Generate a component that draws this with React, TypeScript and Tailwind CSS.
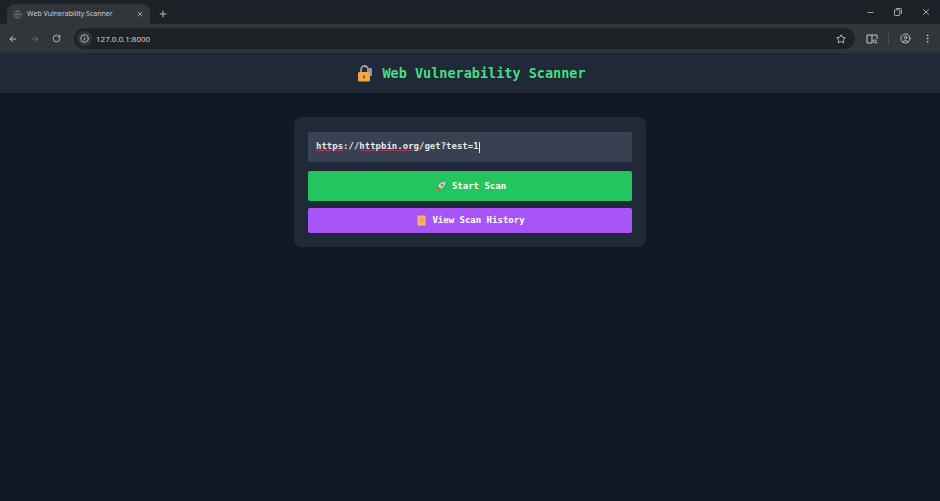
import { ArrowLeft, ArrowRight, Info, Minus, Plus, RotateCw, Star, X, CircleUser, EllipsisVertical, Globe } from 'lucide-react';

const MONO = 'font-["DejaVu_Sans_Mono",monospace]';

function LockEmoji() {
  return (
    <svg width="16" height="17" viewBox="0 0 16 17">
      <path d="M4 8V4.500a3.500 3.500 0 0 1 7 0V8" fill="none" stroke="#a8a29e" strokeWidth="1.800" />
      <rect x="10" y="3" width="5" height="8" rx="1" fill="#8f97a6" />
      <rect x="1" y="7" width="12" height="9.500" rx="1.500" fill="#f5a742" />
      <rect x="6.200" y="10" width="1.800" height="3.600" rx="0.900" fill="#8a5a1c" />
    </svg>
  );
}

function RocketEmoji() {
  return (
    <svg width="11" height="11" viewBox="0 0 11 11">
      <path d="M1 7l2-2 3 3-2 2z" fill="#d9534f" />
      <path d="M3 5c1.500-2.600 4-4.200 7.400-4.400C10.200 4 8.600 6.500 6 8z" fill="#c9ced6" />
      <circle cx="7" cy="4" r="1.100" fill="#4a6fa5" />
      <path d="M1 10l1.500-2 .8.800z" fill="#f59e0b" />
    </svg>
  );
}

function ScrollEmoji() {
  return (
    <svg width="9" height="11" viewBox="0 0 9 11">
      <rect x="0.500" y="0.500" width="8" height="10" rx="0.600" fill="#fbb36b" />
      <path d="M2.500 3h4M2.500 5h4M2.500 7h4" stroke="#e08f45" strokeWidth="0.700" />
    </svg>
  );
}

function SidePanelIcon() {
  return (
    <svg width="12" height="12" viewBox="0 0 12 12" fill="none" stroke="#c4c7c5" strokeWidth="1">
      <path d="M6 2H1v8h5M6 2h5v4M6 2v8" />
      <circle cx="8.800" cy="8.300" r="1.500" />
      <path d="M9.900 9.400l1.400 1.400" />
    </svg>
  );
}

function BrowserChrome() {
  return (
    <div className="font-['Open_Sans',sans-serif]">
      <div className="flex h-6 items-end bg-[#1d2027] pl-[7px]">
        <div className="flex h-5 w-[143px] items-center rounded-t-lg bg-[#32353a] pl-[6px] pr-[6px]">
          <Globe size={9} className="shrink-0 text-[#6f7378]" />
          <span className="ml-[5px] flex-1 truncate text-[7px] text-[#d8dadc]">Web Vulnerability Scanner</span>
          <X size={8} className="text-[#d8dadc]" />
        </div>
        <div className="flex h-5 w-[25px] items-center justify-center">
          <Plus size={10} className="text-[#d8dadc]" />
        </div>
        <div className="flex-1" />
        <div className="flex h-6 items-center gap-[19px] pr-[9px] text-[#c4c7c5]">
          <Minus size={9} />
          <svg width="8" height="8" viewBox="0 0 9 9" fill="none" stroke="currentColor">
            <rect x="0.500" y="2" width="6" height="6.500" rx="1" />
            <path d="M2.500 .5h5a1 1 0 0 1 1 1v5" />
          </svg>
          <X size={10} />
        </div>
      </div>
      <div className="flex h-[29px] items-center border-b-[3px] border-[#2f3237] bg-[#32353a] pt-[3px] pr-[7px]">
        <div className="flex w-[74px] items-center gap-[12px] pl-[8px]">
          <ArrowLeft size={10} className="text-[#d8dadc]" />
          <ArrowRight size={10} className="text-[#6f7276]" />
          <RotateCw size={9} className="text-[#d8dadc]" />
        </div>
        <div className="flex h-[21px] w-[781px] items-center rounded-full bg-[#1e2126] pl-[3px] pr-[9px]">
          <div className="flex h-[15px] w-[15px] items-center justify-center rounded-full bg-[#32353a]">
            <Info size={9} className="text-[#d8dadc]" />
          </div>
          <span className="ml-[4px] flex-1 text-[8px] text-[#d8dadc]">127.0.0.1:8000</span>
          <Star size={10} className="text-[#d8dadc]" />
        </div>
        <div className="flex flex-1 items-center justify-end">
          <SidePanelIcon />
          <div className="ml-[10px] h-3 w-px bg-[#4a4d52]" />
          <CircleUser size={11} className="ml-[11px] text-[#c4c7c5]" />
          <EllipsisVertical size={11} className="ml-[11px] text-[#c4c7c5]" />
        </div>
      </div>
    </div>
  );
}

export default function App() {
  return (
    <div className="flex h-[501px] w-[940px] flex-col overflow-hidden bg-[#111827]">
      <BrowserChrome />
      <header className="flex h-10 items-center justify-center gap-[9px] bg-[#1f2937] pl-[3px] pt-px">
        <LockEmoji />
        <h1 className={`${MONO} text-[13.500px] font-bold text-[#4ade80]`}>Web Vulnerability Scanner</h1>
      </header>
      <main className="flex justify-center pt-6">
        <div className={`${MONO} flex w-[352px] flex-col rounded-lg bg-[#1f2937] px-3.5 pb-3.5 pt-[15px]`}>
          <div className="flex h-[30px] items-center rounded-[2px] bg-[#374151] px-2 text-[9px] font-bold text-[#e5e7eb]">
            <span className="underline decoration-[#a8394a] decoration-1 underline-offset-[1px]">https</span>
            <span>://</span>
            <span className="underline decoration-[#a8394a] decoration-1 underline-offset-[1px]">httpbin.org</span>
            <span>/get?test=1</span>
            <span className="h-[11px] w-px bg-[#e5e7eb]" />
          </div>
          <button className="mt-[9px] flex h-[30px] items-center justify-center gap-[6px] rounded-[2px] bg-[#22c55e] pl-px pt-px text-[9px] font-bold text-white">
            <RocketEmoji />
            Start Scan
          </button>
          <button className="mt-[7px] flex h-[25px] items-center justify-center gap-[6px] rounded-[2px] bg-[#a855f7] pl-0.5 text-[9px] font-bold text-white">
            <ScrollEmoji />
            View Scan History
          </button>
        </div>
      </main>
    </div>
  );
}
